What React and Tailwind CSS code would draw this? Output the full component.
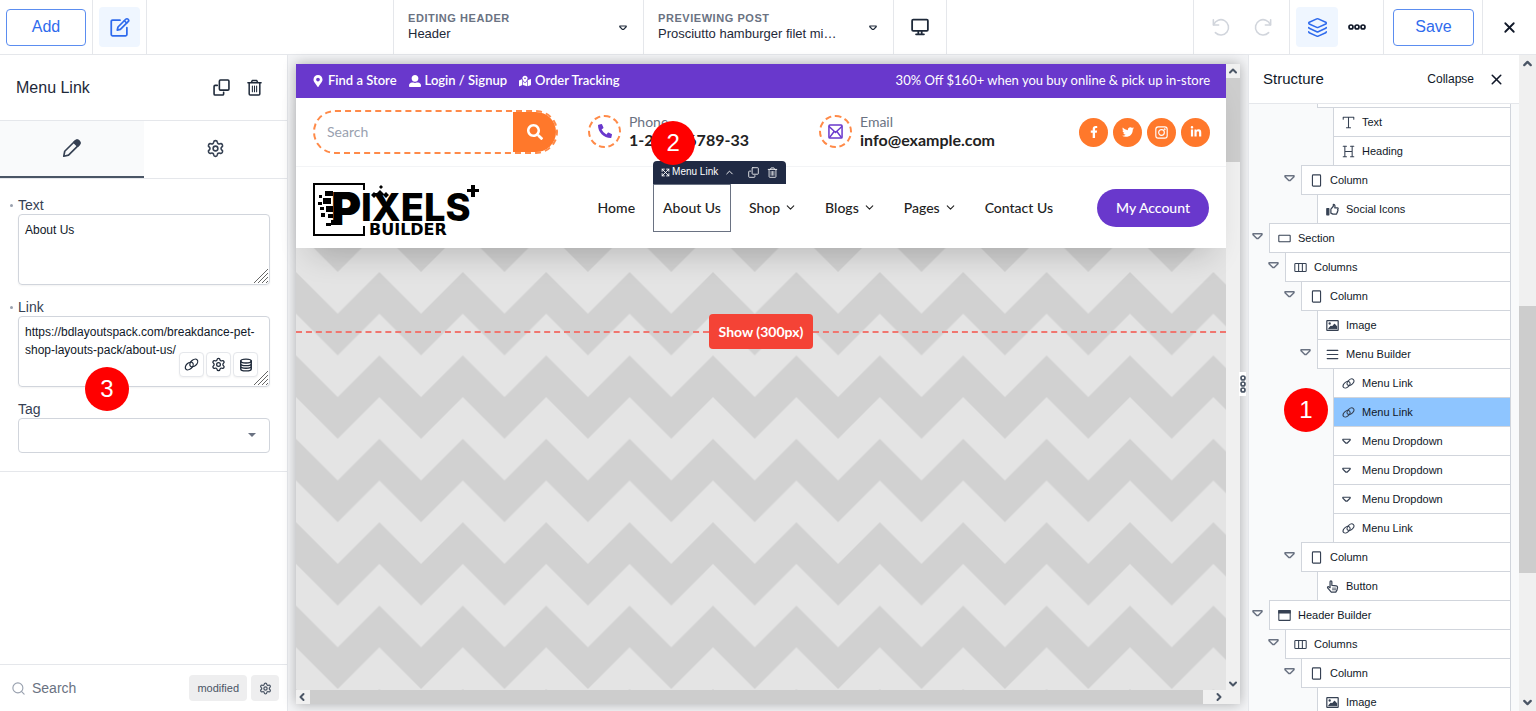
import { FaFacebookF, FaLinkedinIn, FaMapMarkedAlt, FaMapMarkerAlt, FaPhoneAlt, FaSearch, FaTwitter, FaUserAlt } from 'react-icons/fa';
import { ChevronDown, ChevronLeft, ChevronRight, ChevronUp, Layers, Search, Settings, X } from 'lucide-react';

const INDENT = ['ml-5', 'ml-9', 'ml-13', 'ml-17', 'ml-21'];

const TREE = [
  { label: 'Text', icon: 'text', depth: 4 },
  { label: 'Heading', icon: 'heading', depth: 4 },
  { label: 'Column', icon: 'column', depth: 2, open: true },
  { label: 'Social Icons', icon: 'thumb', depth: 3 },
  { label: 'Section', icon: 'section', depth: 0, open: true },
  { label: 'Columns', icon: 'columns', depth: 1, open: true },
  { label: 'Column', icon: 'column', depth: 2, open: true },
  { label: 'Image', icon: 'image', depth: 3 },
  { label: 'Menu Builder', icon: 'menu', depth: 3, open: true },
  { label: 'Menu Link', icon: 'link', depth: 4 },
  { label: 'Menu Link', icon: 'link', depth: 4, active: true },
  { label: 'Menu Dropdown', icon: 'dropdown', depth: 4 },
  { label: 'Menu Dropdown', icon: 'dropdown', depth: 4 },
  { label: 'Menu Dropdown', icon: 'dropdown', depth: 4 },
  { label: 'Menu Link', icon: 'link', depth: 4 },
  { label: 'Column', icon: 'column', depth: 2, open: true },
  { label: 'Button', icon: 'pointer', depth: 3 },
  { label: 'Header Builder', icon: 'header', depth: 0, open: true },
  { label: 'Columns', icon: 'columns', depth: 1, open: true },
  { label: 'Column', icon: 'column', depth: 2, open: true },
  { label: 'Image', icon: 'image', depth: 3 },
];

/* ---------- icons ---------- */

function Svg({ size = 16, children, className, sw = 1.5 }) {
  return (
    <svg width={size} height={size} viewBox="0 0 16 16" fill="none" stroke="currentColor" strokeWidth={sw} strokeLinecap="round" strokeLinejoin="round" className={className} aria-hidden="true">
      {children}
    </svg>
  );
}

const TriangleIcon = ({ size = 10, className }) => (
  <Svg size={size} className={className} sw={2.2}>
    <path d="M1.500 4h13v1.500L9 11H7L1.500 5.500z" />
  </Svg>
);

const DuplicateIcon = ({ size = 18, sw = 1.5 }) => (
  <Svg size={size} sw={sw}>
    <rect x="6" y="1" width="9" height="9.5" rx="1" />
    <path d="M4 6H2a1 1 0 0 0-1 1v7a1 1 0 0 0 1 1h7a1 1 0 0 0 1-1v-1.500" />
  </Svg>
);

const TrashIcon = ({ size = 18, sw = 1.4 }) => (
  <Svg size={size} sw={sw}>
    <path d="M1.800 3.500h12.400M5 3.300l1-2h4l1 2M3 3.800V14a1 1 0 0 0 1 1h8a1 1 0 0 0 1-1V3.800" />
    <path d="M6 6.500v5.500M8 6.500v5.500M10 6.500v5.500" strokeWidth="1" />
  </Svg>
);

const LinkIcon = ({ size = 14 }) => (
  <Svg size={size} sw={1.3}>
    <ellipse cx="5.600" cy="9.600" rx="4.900" ry="3.200" transform="rotate(-42 5.600 9.600)" />
    <ellipse cx="10.400" cy="6.400" rx="4.900" ry="3.200" transform="rotate(-42 10.400 6.400)" />
  </Svg>
);

const DatabaseIcon = () => (
  <Svg size={14} sw={1.6}>
    <ellipse cx="8" cy="3.500" rx="6" ry="2.200" />
    <path d="M2 3.500v9c0 1.200 2.700 2.200 6 2.200s6-1 6-2.200v-9M2 6.500c0 1.200 2.700 2.200 6 2.200s6-1 6-2.200M2 9.500c0 1.200 2.700 2.200 6 2.200s6-1 6-2.200" />
  </Svg>
);

const PencilIcon = () => (
  <Svg size={19} sw={1.4}>
    <path d="M1.500 14.500l.8-4.200L10.800 1.900a2.200 2.200 0 0 1 3.200 3.200l-8.500 8.500z" />
    <path d="M10 2.800l3.200 3.200 1.200-1.300a2 2 0 0 0-3-3z" fill="currentColor" />
  </Svg>
);

const EditIcon = () => (
  <Svg size={20} sw={1.4}>
    <path d="M8 2.500H2a1 1 0 0 0-1 1V14a1 1 0 0 0 1 1h10.500a1 1 0 0 0 1-1V8.500" />
    <path d="M5.800 10.500l.6-2.500 6.200-6.200a1.300 1.300 0 0 1 1.900 1.900L8.300 9.900z" />
    <path d="M11.500 3l1.800 1.800" />
  </Svg>
);

const MonitorIcon = () => (
  <Svg size={18} sw={1.6}>
    <rect x="1" y="1.500" width="14" height="10" rx="1" />
    <path d="M6.500 11.700v2.600M9.500 11.700v2.600M4.500 14.500h7" />
  </Svg>
);

const UndoIcon = ({ className }) => (
  <Svg size={18} sw={1.4} className={className}>
    <path d="M1.200 1.500v4.700h4.700" />
    <path d="M1.500 6a6.800 6.800 0 1 1 1.500 7" />
  </Svg>
);

const DotsIcon = ({ className }) => (
  <svg width="18" height="6" viewBox="0 0 18 6" fill="none" stroke="currentColor" strokeWidth="1.700" className={className} aria-hidden="true">
    <circle cx="3" cy="3" r="2" />
    <circle cx="9" cy="3" r="2" />
    <circle cx="15" cy="3" r="2" />
  </svg>
);

const ResizeGrip = () => (
  <svg width="14" height="14" viewBox="0 0 14 14" stroke="#666" strokeWidth="1" className="pointer-events-none absolute right-0.5 bottom-0.5" aria-hidden="true">
    <path d="M0 14L14 0M4 14L14 4M8 14L14 8M12 14L14 12" />
  </svg>
);

function TreeIcon({ name }) {
  switch (name) {
    case 'text':
      return <Svg size={13} sw={1.3}><path d="M1.500 4V1.500h13V4M8 1.500v13M5.500 14.500h5" /></Svg>;
    case 'heading':
      return <Svg size={13} sw={1.3}><path d="M3.500 1.500v13M12.500 1.500v13M3.500 8h9M1.500 1.500h4M10.500 1.500h4M1.500 14.500h4M10.500 14.500h4" /></Svg>;
    case 'column':
      return <Svg size={13} sw={1.4}><rect x="3" y="1" width="10" height="14" rx="1" /></Svg>;
    case 'section':
      return <Svg size={13} sw={1.3}><rect x="1" y="4" width="14" height="8" rx="0.500" /></Svg>;
    case 'columns':
      return <Svg size={13} sw={1.3}><rect x="1" y="3" width="14" height="10" rx="1" /><path d="M5.700 3v10M10.300 3v10" /></Svg>;
    case 'image':
      return (
        <Svg size={13} sw={1.5}>
          <rect x="1" y="2" width="14" height="12" rx="0.500" />
          <circle cx="4.500" cy="5.500" r="0.700" fill="currentColor" />
          <path d="M3.500 12l2.500-3 1.500 1 3-3.500 2.500 3V12z" fill="currentColor" />
        </Svg>
      );
    case 'menu':
      return <Svg size={13} sw={1.5}><path d="M1.500 3h13M1.500 8h13M1.500 13h13" /></Svg>;
    case 'link':
      return <LinkIcon size={13} />;
    case 'dropdown':
      return <TriangleIcon size={9} />;
    case 'thumb':
      return (
        <Svg size={13} sw={1.5}>
          <rect x="1" y="7" width="2.500" height="7.500" fill="currentColor" />
          <path d="M6 7.500L9 4V1.800c1.800 0 2.500 1.400 1.800 4.200H14c1.300 0 1.300 1.800.3 2.200.8.500.5 1.800-.3 2 .5.700.2 1.600-.6 1.800.2 1-.4 1.700-1.400 1.700H8.500L6 12.500z" />
        </Svg>
      );
    case 'pointer':
      return (
        <Svg size={13} sw={1.5}>
          <path d="M5 9.500V2.200c0-1.600 2.200-1.600 2.200 0V6.500l5.500.8c1.200.2 1.600 1 1.500 2l-.7 3.200-1.500 2.500H6.500L2 9.700c-.6-1.200.8-1.900 1.600-1.200z" />
          <path d="M8 10h4M8 12h4" strokeWidth="1" />
        </Svg>
      );
    default:
      return (
        <Svg size={13} sw={1.3}>
          <rect x="1" y="2" width="14" height="12" rx="0.500" />
          <path d="M1 2h14v3H1z" fill="currentColor" />
        </Svg>
      );
  }
}

function Logo() {
  return (
    <svg width="168" height="56" viewBox="0 0 168 56" className="shrink-0 overflow-visible text-black" fill="currentColor" role="img" aria-label="Pixels Builder">
      <path d="M51 10V4H1v51h50v-9" fill="none" stroke="currentColor" strokeWidth="2" />
      <text x="18" y="45" fontFamily="Inter, sans-serif" fontWeight="900" fontSize="46">P</text>
      <text x="48" y="41" fontFamily="Inter, sans-serif" fontWeight="800" fontSize="38">IXELS</text>
      <text x="56" y="55" fontFamily="'DejaVu Sans', sans-serif" fontWeight="700" fontSize="16">BUILDER</text>
      <path d="M10 18h8v6h-8zM6 15h3v3H6zM12 11h8v5h-8zM5 22h4v3H5zM7 27h4v3H7zM13 26h7v6h-7zM8 33h4v4H8zM15 34h5v4h-5zM13 43h5v3h-5zM18 40h6v5h-6z" />
      <path d="M61 12l3 3-3 3-3-3zM67 10l4 4-4 4-4-4zM68 5l2 2-2 2-2-2zM73 12l3 3-3 3-3-3z" />
      <path d="M154 9h4V5h4v4h4v3h-4v5h-4v-5h-4z" />
    </svg>
  );
}

/* ---------- shared bits ---------- */

function Marker({ children, className }) {
  return (
    <div className={`absolute z-20 flex size-11 items-center justify-center rounded-full bg-[#ff0000] text-2xl text-white ${className}`}>
      {children}
    </div>
  );
}

function IconButton({ label, className = '', children }) {
  return (
    <button type="button" aria-label={label} className={`flex items-center justify-center ${className}`}>
      {children}
    </button>
  );
}

/* ---------- top bar ---------- */

function BarSelect({ id, label, value }) {
  return (
    <div className="relative flex w-[250px] flex-col justify-center border-l border-gray-200 pr-10 pb-[3px] pl-3.5">
      <label htmlFor={id} className="text-[11px] leading-4 font-bold tracking-wider text-gray-500 uppercase">{label}</label>
      <select id={id} className="w-full appearance-none truncate bg-transparent text-[13px] leading-4 text-gray-800">
        <option>{value}</option>
      </select>
      <TriangleIcon size={8} className="pointer-events-none absolute top-6 right-4 text-gray-800" />
    </div>
  );
}

function TopBar() {
  return (
    <header className="flex h-[55px] shrink-0 justify-between border-b border-gray-200 bg-white">
      <div className="flex">
        <div className="flex items-center border-r border-gray-200 px-1.5">
          <button type="button" className="h-[37px] w-20 rounded-sm border border-[#5b8df0] text-base text-[#2f6bed]">Add</button>
        </div>
        <div className="flex items-center border-r border-gray-200 px-1.5">
          <IconButton label="Edit" className="h-10 w-[41px] rounded bg-blue-50 text-[#2f6bed]"><EditIcon /></IconButton>
        </div>
      </div>

      <div className="flex">
        <BarSelect id="editing" label="Editing Header" value="Header" />
        <BarSelect id="previewing" label="Previewing Post" value="Prosciutto hamburger filet mi…" />
        <IconButton label="Desktop" className="w-[54px] border-x border-gray-200 text-gray-800"><MonitorIcon /></IconButton>
      </div>

      <div className="flex">
        <div className="flex w-[96px] items-center justify-center gap-6 border-l border-gray-200 text-gray-300">
          <IconButton label="Undo"><UndoIcon /></IconButton>
          <IconButton label="Redo"><UndoIcon className="-scale-x-100" /></IconButton>
        </div>
        <div className="flex w-[94px] items-center gap-2.5 border-l border-gray-200 pl-1.5">
          <IconButton label="Structure" className="h-10 w-[42px] rounded bg-blue-50 text-[#2f6bed]"><Layers size={21} strokeWidth={1.8} /></IconButton>
          <IconButton label="More" className="text-gray-900"><DotsIcon /></IconButton>
        </div>
        <div className="flex w-[99px] items-center border-l border-gray-200 pl-[9px]">
          <button type="button" className="h-[37px] w-[81px] rounded-sm border border-[#5b8df0] text-base text-[#2f6bed]">Save</button>
        </div>
        <IconButton label="Close" className="w-[54px] border-l border-gray-200 text-gray-900"><X size={17} strokeWidth={2.5} /></IconButton>
      </div>
    </header>
  );
}

/* ---------- left panel ---------- */

function FieldButton({ label, children }) {
  return (
    <IconButton label={label} className="size-[25px] rounded border border-gray-200 bg-white text-gray-800 shadow-xs">
      {children}
    </IconButton>
  );
}

function PropertiesPanel() {
  return (
    <aside className="relative flex w-72 shrink-0 flex-col border-r border-gray-200 bg-white">
      <div className="flex h-[66px] items-center border-b border-gray-200 pr-6 pl-4 text-gray-800">
        <h2 className="flex-1 text-base">Menu Link</h2>
        <div className="flex gap-4">
          <IconButton label="Duplicate"><DuplicateIcon size={17} /></IconButton>
          <IconButton label="Delete"><TrashIcon size={17} /></IconButton>
        </div>
      </div>
      <div className="flex h-[58px] border-b border-gray-200 text-gray-700">
        <IconButton label="Content" className="flex-1 border-b-2 border-gray-600 bg-gray-50"><PencilIcon /></IconButton>
        <IconButton label="Settings" className="flex-1 border-b-2 border-transparent"><Settings size={19} strokeWidth={2} /></IconButton>
      </div>

      <form className="border-b border-gray-200 pt-[17px] pr-[17px] pb-[18px] pl-[18px]">
        <div className="relative">
          <span className="absolute top-2 -left-2 size-[3px] rounded-full bg-gray-400" />
          <label htmlFor="text" className="block text-sm leading-[18px] text-gray-700">Text</label>
          <div className="relative flex">
            <textarea id="text" defaultValue="About Us" className="h-[71px] w-full resize-none rounded border border-gray-300 px-1.5 py-1.5 text-xs leading-[18px] text-gray-900 shadow-xs" />
            <ResizeGrip />
          </div>
        </div>
        <div className="relative mt-[13px]">
          <span className="absolute top-2 -left-2 size-[3px] rounded-full bg-gray-400" />
          <label htmlFor="link" className="block text-sm leading-[18px] text-gray-700">Link</label>
          <div className="relative flex">
            <textarea id="link" defaultValue="https://bdlayoutspack.com/breakdance-pet-shop-layouts-pack/about-us/" className="h-[71px] w-full resize-none rounded border border-gray-300 px-1.5 py-1.5 text-xs leading-[18px] text-gray-900 shadow-xs" />
            <div className="absolute right-3 bottom-2.5 flex gap-0.5">
              <FieldButton label="Choose link"><LinkIcon size={15} /></FieldButton>
              <FieldButton label="Link settings"><Settings size={15} strokeWidth={2} /></FieldButton>
              <FieldButton label="Dynamic data"><DatabaseIcon /></FieldButton>
            </div>
            <ResizeGrip />
          </div>
        </div>
        <div className="relative mt-[13px]">
          <label htmlFor="tag" className="block text-sm leading-[18px] text-gray-700">Tag</label>
          <select id="tag" className="block h-[35px] w-full appearance-none rounded border border-gray-300 bg-white px-2 text-xs">
            <option></option>
          </select>
          <span className="pointer-events-none absolute right-3.5 bottom-4 border-x-4 border-t-4 border-x-transparent border-t-gray-500" />
        </div>
      </form>

      <div className="mt-auto flex h-[47px] items-center gap-1 border-t border-gray-200 pr-2 pl-[11px]">
        <Search size={15} strokeWidth={1.8} className="shrink-0 text-gray-400" />
        <input aria-label="Search" placeholder="Search" className="min-w-0 flex-1 pl-0.5 text-sm text-gray-700 placeholder:text-gray-500" />
        <button type="button" className="h-[26px] rounded-sm bg-[#eeeeef] px-2 text-[11px] text-gray-600">modified</button>
        <IconButton label="Filter settings" className="h-[26px] w-7 rounded-sm bg-[#eeeeef] text-gray-600"><Settings size={13} strokeWidth={2.3} /></IconButton>
      </div>
      <Marker className="top-[312px] left-[85px]">3</Marker>
    </aside>
  );
}

/* ---------- page preview ---------- */

function ContactItem({ icon, title, value }) {
  return (
    <div className="flex w-[231px] items-center gap-2 pb-0.5">
      <span className="flex size-[33px] shrink-0 items-center justify-center rounded-full border-2 border-dashed border-[#ff8a48] text-[#6938cc]">{icon}</span>
      <div>
        <div className="text-sm leading-[18px] text-gray-500">{title}</div>
        <div className="text-base leading-[18px] font-bold whitespace-nowrap text-[#222]">{value}</div>
      </div>
    </div>
  );
}

function SiteHeader() {
  return (
    <div className="relative z-10 bg-white shadow-[0_20px_30px_-15px_rgba(0,0,0,0.2)]">
      <div className="flex h-[34px] items-center justify-between bg-[#6938cc] px-4 text-[13px] text-white">
        <div className="flex gap-3 font-semibold">
          <a href="#store" className="flex items-center gap-1"><FaMapMarkerAlt className="text-xs" />Find a Store</a>
          <a href="#login" className="flex items-center gap-1"><FaUserAlt className="text-xs" />Login / Signup</a>
          <a href="#orders" className="flex items-center gap-1"><FaMapMarkedAlt className="text-xs" />Order Tracking</a>
        </div>
        <p className="font-normal">30% Off $160+ when you buy online &amp; pick up in-store</p>
      </div>

      <div className="flex h-[69px] items-center border-b border-gray-100 pr-4 pl-[17px]">
        <form className="mr-[30px] flex h-11 w-[245px] overflow-hidden rounded-full border-2 border-dashed border-[#ff8a48]">
          <input aria-label="Search site" placeholder="Search" className="min-w-0 flex-1 pl-3 text-sm placeholder:text-gray-400" />
          <button type="button" aria-label="Search" className="flex w-[43px] items-center justify-center bg-[#ff782b] text-white"><FaSearch className="text-base" /></button>
        </form>
        <ContactItem icon={<FaPhoneAlt className="text-sm" />} title="Phone" value="1-234-56789-33" />
        <ContactItem
          icon={<Svg size={15} sw={1.6}><rect x="1" y="1" width="14" height="14" rx="1" /><path d="M1.500 3L8 9l6.500-6M2 14l4.500-6M14 14L9.500 8" /></Svg>}
          title="Email"
          value="info@example.com"
        />
        <div className="ml-auto flex gap-[5px] text-white">
          <a href="#facebook" aria-label="Facebook" className="flex size-[29px] items-center justify-center rounded-full bg-[#ff782b]"><FaFacebookF className="text-xs" /></a>
          <a href="#twitter" aria-label="Twitter" className="flex size-[29px] items-center justify-center rounded-full bg-[#ff782b]"><FaTwitter className="text-xs" /></a>
          <a href="#instagram" aria-label="Instagram" className="flex size-[29px] items-center justify-center rounded-full bg-[#ff782b]">
            <Svg size={13} sw={1.4}><rect x="1" y="1" width="14" height="14" rx="3" /><circle cx="8" cy="8" r="3.500" /><circle cx="12" cy="4" r="0.400" /></Svg>
          </a>
          <a href="#linkedin" aria-label="LinkedIn" className="flex size-[29px] items-center justify-center rounded-full bg-[#ff782b]"><FaLinkedinIn className="text-xs" /></a>
        </div>
      </div>

      <div className="flex h-[81px] items-center px-[17px]">
        <Logo />
        <nav className="mr-11 ml-auto flex gap-7 text-sm font-medium text-[#222]">
          <a href="#home">Home</a>
          <div className="relative">
            <a href="#about">About Us</a>
            <div className="pointer-events-none absolute -inset-x-2.5 -inset-y-3.5 border border-gray-500" />
            <div className="absolute -top-[37px] -left-2.5 flex h-[23px] w-[133px] items-center rounded-t-sm bg-[#202a44] px-2 text-[10px] font-normal text-white [font-family:'Liberation_Sans',Arial,sans-serif]">
              <Svg size={9} sw={1.6}><path d="M2 6V2h4M10 2h4v4M14 10v4h-4M6 14H2v-4M2 2l12 12M14 2L2 14" /></Svg>
              <span className="ml-0.5 whitespace-nowrap">Menu Link</span>
              <ChevronUp size={11} className="ml-1.5 shrink-0" />
              <span className="ml-auto flex gap-2"><DuplicateIcon size={11} sw={1.2} /><TrashIcon size={11} sw={1.2} /></span>
            </div>
            <Marker className="-top-[77px] -left-3 font-normal [font-family:'Liberation_Sans',Arial,sans-serif]">2</Marker>
          </div>
          {['Shop', 'Blogs', 'Pages'].map((item) => (
            <a key={item} href={`#${item}`} className="flex items-center gap-1">{item}<ChevronDown size={13} strokeWidth={2} /></a>
          ))}
          <a href="#contact">Contact Us</a>
        </nav>
        <a href="#account" className="flex h-[38px] w-28 items-center justify-center rounded-full bg-[#6938cc] text-sm font-medium text-white">My Account</a>
      </div>
    </div>
  );
}

function Preview() {
  return (
    <main className="relative flex min-w-0 flex-1 bg-gray-100 pt-[9px] pr-2 pb-[7px] pl-2">
      <div className="flex min-w-0 flex-1 shadow-[0_0_12px_rgba(0,0,0,0.3)]">
        <div className="flex min-w-0 flex-1 flex-col [font-family:Lato,sans-serif]">
          <SiteHeader />
          <div className="relative flex-1 bg-[#e4e4e4]">
            <svg className="absolute inset-0 size-full" aria-hidden="true">
              <defs>
                <pattern id="zigzag" width="83.400" height="83.400" y="24" patternUnits="userSpaceOnUse">
                  <path d="M0 0L41.700 41.700 83.400 0v41.700L41.700 83.400 0 41.700z" fill="#d1d1d1" />
                </pattern>
              </defs>
              <rect width="100%" height="100%" fill="url(#zigzag)" />
            </svg>
            <div className="relative flex items-center pt-[66px]">
              <div className="flex-1 border-t-2 border-dashed border-[#f0766f]" />
              <button type="button" className="h-[35px] w-[104px] rounded bg-[#f44336] text-sm font-bold text-white">Show (300px)</button>
              <div className="flex-1 border-t-2 border-dashed border-[#f0766f]" />
            </div>
          </div>
          <div className="flex h-3.5 shrink-0 items-center bg-[#f0f0f0] text-gray-600">
            <ChevronLeft size={12} strokeWidth={4} className="mr-0.5 shrink-0" />
            <div className="h-full flex-1 bg-[#cdcdcd]" />
            <ChevronRight size={12} strokeWidth={4} className="mr-px ml-2.5 shrink-0" />
          </div>
        </div>
        <div className="flex w-3.5 shrink-0 flex-col items-center bg-[#f0f0f0] text-gray-600">
          <ChevronUp size={12} strokeWidth={4} className="my-px shrink-0" />
          <div className="w-full flex-[84] bg-[#cdcdcd]" />
          <div className="flex-[515]" />
          <ChevronDown size={12} strokeWidth={4} className="mb-3.5 shrink-0" />
        </div>
      </div>
      <div className="absolute top-[317px] right-0.5 flex h-6 w-[7px] items-center justify-center bg-white text-gray-600">
        <DotsIcon className="shrink-0 rotate-90" />
      </div>
    </main>
  );
}

/* ---------- structure panel ---------- */

function TreeRow({ node }) {
  return (
    <li className={`relative -mt-px ${INDENT[node.depth]}`}>
      {node.open && (
        <IconButton label="Toggle" className="absolute top-2 -left-[17px] text-gray-500"><TriangleIcon size={11} /></IconButton>
      )}
      <div className={`flex h-[30px] items-center border border-gray-300 pl-2 text-[11px] text-gray-900 ${node.active ? 'bg-blue-300' : 'bg-white'}`}>
        <span className="w-5 text-gray-700"><TreeIcon name={node.icon} /></span>
        <span>{node.label}</span>
      </div>
    </li>
  );
}

function StructurePanel() {
  return (
    <aside className="relative flex shrink-0 border-l border-gray-200 bg-white">
      <div className="flex w-[270px] flex-col">
        <div className="flex h-[49px] shrink-0 items-center border-b border-gray-200 pr-3.5 pl-3.5 text-gray-900">
          <h2 className="flex-1 text-[15px]">Structure</h2>
          <button type="button" className="mr-3.5 text-xs">Collapse</button>
          <IconButton label="Close structure"><X size={17} strokeWidth={2.2} /></IconButton>
        </div>
        <ul className="min-h-0 flex-1 overflow-hidden bg-gray-50 pr-2">
          <li className="ml-17 h-1 border-x border-b border-gray-300 bg-white" />
          {TREE.map((node, i) => (
            <TreeRow key={i} node={node} />
          ))}
        </ul>
      </div>
      <div className="flex w-[17px] shrink-0 flex-col items-center bg-[#f0f0f0] text-gray-600">
        <ChevronUp size={13} strokeWidth={4} className="my-0.5 shrink-0" />
        <div className="flex-[234]" />
        <div className="w-full flex-[267] bg-[#cdcdcd]" />
        <div className="flex-[121]" />
        <ChevronDown size={13} strokeWidth={4} className="my-0.5 shrink-0" />
      </div>
      <Marker className="top-[333px] left-[35px]">1</Marker>
    </aside>
  );
}

export default function App() {
  return (
    <div className="flex h-screen flex-col overflow-hidden [font-family:'Liberation_Sans',Arial,sans-serif]">
      <TopBar />
      <div className="flex min-h-0 flex-1">
        <PropertiesPanel />
        <Preview />
        <StructurePanel />
      </div>
    </div>
  );
}
